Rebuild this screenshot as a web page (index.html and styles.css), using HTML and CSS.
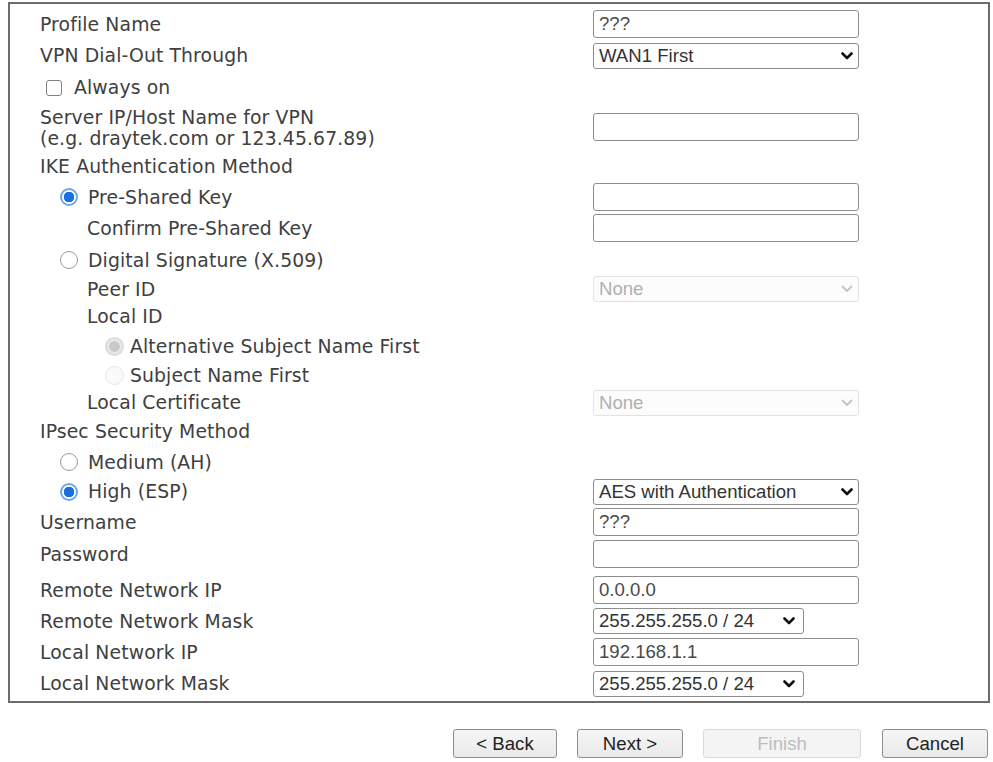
FILE: index.html
```html
<!DOCTYPE html>
<html lang="en">
<head>
<meta charset="utf-8">
<title>VPN Profile Wizard</title>
<link rel="stylesheet" href="styles.css">
</head>
<body>
<div class="page">
  <form class="panel">
    <div class="row h32">
      <div class="lbl">Profile Name</div>
      <div class="ctl"><input class="txt" type="text" value="???"></div>
    </div>
    <div class="row h31">
      <div class="lbl">VPN Dial-Out Through</div>
      <div class="ctl"><div class="sel"><span>WAN1 First</span><svg class="chev" viewBox="0 0 12 8" width="12" height="8"><path d="M1.5 1.5 L6 6 L10.5 1.5" /></svg></div></div>
    </div>
    <div class="row h33">
      <label class="lbl chk-wrap"><input class="chk" type="checkbox"><span>Always on</span></label>
      <div class="ctl"></div>
    </div>
    <div class="row h46">
      <div class="lbl two">Server IP/Host Name for VPN<br>(e.g. draytek.com or 123.45.67.89)</div>
      <div class="ctl"><input class="txt" type="text" value=""></div>
    </div>
    <div class="row h32">
      <div class="lbl">IKE Authentication Method</div>
      <div class="ctl"></div>
    </div>
    <div class="row h30">
      <label class="lbl ind1"><input class="rad" type="radio" name="ike" checked><span>Pre-Shared Key</span></label>
      <div class="ctl"><input class="txt" type="password" value=""></div>
    </div>
    <div class="row h32">
      <div class="lbl ind2">Confirm Pre-Shared Key</div>
      <div class="ctl"><input class="txt" type="password" value=""></div>
    </div>
    <div class="row h32">
      <label class="lbl ind1"><input class="rad" type="radio" name="ike"><span>Digital Signature (X.509)</span></label>
      <div class="ctl"></div>
    </div>
    <div class="row h25">
      <div class="lbl ind2">Peer ID</div>
      <div class="ctl"><div class="sel dis"><span>None</span><svg class="chev" viewBox="0 0 12 8" width="12" height="8"><path d="M1.5 1.5 L6 6 L10.5 1.5" /></svg></div></div>
    </div>
    <div class="row h30">
      <div class="lbl ind2">Local ID</div>
      <div class="ctl"></div>
    </div>
    <div class="row h30">
      <label class="lbl ind3"><input class="rad sm" type="radio" name="lid" checked disabled><span>Alternative Subject Name First</span></label>
      <div class="ctl"></div>
    </div>
    <div class="row h28">
      <label class="lbl ind3"><input class="rad sm" type="radio" name="lid" disabled><span>Subject Name First</span></label>
      <div class="ctl"></div>
    </div>
    <div class="row h27">
      <div class="lbl ind2">Local Certificate</div>
      <div class="ctl"><div class="sel dis"><span>None</span><svg class="chev" viewBox="0 0 12 8" width="12" height="8"><path d="M1.5 1.5 L6 6 L10.5 1.5" /></svg></div></div>
    </div>
    <div class="row h31">
      <div class="lbl">IPsec Security Method</div>
      <div class="ctl"></div>
    </div>
    <div class="row h30">
      <label class="lbl ind1"><input class="rad" type="radio" name="sec"><span>Medium (AH)</span></label>
      <div class="ctl"></div>
    </div>
    <div class="row h29">
      <label class="lbl ind1"><input class="rad" type="radio" name="sec" checked><span>High (ESP)</span></label>
      <div class="ctl"><div class="sel"><span>AES with Authentication</span><svg class="chev" viewBox="0 0 12 8" width="12" height="8"><path d="M1.5 1.5 L6 6 L10.5 1.5" /></svg></div></div>
    </div>
    <div class="row h32">
      <div class="lbl">Username</div>
      <div class="ctl"><input class="txt" type="text" value="???"></div>
    </div>
    <div class="row h32">
      <div class="lbl">Password</div>
      <div class="ctl"><input class="txt" type="password" value=""></div>
    </div>
    <div class="row h32 gap-top">
      <div class="lbl">Remote Network IP</div>
      <div class="ctl"><input class="txt" type="text" value="0.0.0.0"></div>
    </div>
    <div class="row h30">
      <div class="lbl">Remote Network Mask</div>
      <div class="ctl"><div class="sel short"><span>255.255.255.0 / 24</span><svg class="chev" viewBox="0 0 12 8" width="12" height="8"><path d="M1.5 1.5 L6 6 L10.5 1.5" /></svg></div></div>
    </div>
    <div class="row h32">
      <div class="lbl">Local Network IP</div>
      <div class="ctl"><input class="txt" type="text" value="192.168.1.1"></div>
    </div>
    <div class="row h31">
      <div class="lbl">Local Network Mask</div>
      <div class="ctl"><div class="sel short"><span>255.255.255.0 / 24</span><svg class="chev" viewBox="0 0 12 8" width="12" height="8"><path d="M1.5 1.5 L6 6 L10.5 1.5" /></svg></div></div>
    </div>
  </form>
  <div class="buttons">
    <button class="btn" type="button">&lt; Back</button>
    <button class="btn next" type="button">Next &gt;</button>
    <button class="btn wide" type="button" disabled>Finish</button>
    <button class="btn next last" type="button">Cancel</button>
  </div>
</div>
</body>
</html>
```
FILE: styles.css
```css
* { box-sizing: border-box; }

html, body {
  margin: 0;
  background: #ffffff;
}

body {
  font-family: "DejaVu Sans", Verdana, sans-serif;
  font-size: 18.8px;
  letter-spacing: 0.12px;
  color: #404040;
}

.page {
  padding: 2px 3px 0 8px;
}

.panel {
  border: 2px solid #6c6c6c;
  padding: 4px 0 2px 30px;
  height: 701px;
  margin: 0;
}

.row {
  display: grid;
  grid-template-columns: 553px 266px;
  align-items: center;
}

.h25 { height: 25px; }
.h27 { height: 27px; }
.h28 { height: 28px; }
.h29 { height: 29px; }
.h30 { height: 30px; }
.h31 { height: 31px; }
.h32 { height: 32px; }
.h33 { height: 33px; }
.h46 { height: 46px; }

.gap-top { margin-top: 4px; }

.lbl {
  display: flex;
  align-items: center;
  white-space: nowrap;
  line-height: 21px;
}

.lbl.two {
  display: block;
  padding-top: 1px;
}

.ind1 { padding-left: 20px; }
.ind2 { padding-left: 47px; }
.ind3 { padding-left: 65px; }

.ctl {
  display: flex;
  align-items: center;
}

/* text inputs */
.txt {
  width: 266px;
  height: 28px;
  margin: 0;
  border: 1.5px solid #8e8e8e;
  border-radius: 3px;
  padding: 0 5px;
  font-family: "Liberation Sans", Arial, sans-serif;
  font-size: 18.6px;
  letter-spacing: 0;
  color: #4a4a4a;
  background: #fff;
  outline: none;
}

/* selects */
.sel {
  width: 266px;
  height: 26px;
  border: 1.5px solid #8e8e8e;
  border-radius: 3px;
  padding: 0 5px 0 5px;
  display: flex;
  align-items: center;
  justify-content: space-between;
  font-family: "Liberation Sans", Arial, sans-serif;
  font-size: 18.6px;
  letter-spacing: 0;
  color: #333;
  background: #fff;
}

.sel.short {
  width: 211px;
  padding-right: 8px;
}

.chev {
  flex: none;
  fill: none;
  stroke: #111;
  stroke-width: 2.6;
  stroke-linecap: round;
  stroke-linejoin: round;
}

.sel.dis {
  border-color: #e2e2e2;
  color: #b0b0b0;
  background: #fcfcfc;
}

.sel.dis .chev {
  stroke: #c4c4c4;
  stroke-width: 1.8;
}

/* checkbox */
.chk-wrap { padding-left: 6px; }

.chk {
  appearance: none;
  -webkit-appearance: none;
  width: 16px;
  height: 16px;
  margin: 0 12px 0 0;
  border: 1.5px solid #808080;
  border-radius: 3px;
  background: #fff;
  flex: none;
}

/* radios */
.rad {
  appearance: none;
  -webkit-appearance: none;
  width: 18px;
  height: 18px;
  margin: 0 10px 0 0;
  border: 1.5px solid #9a9a9a;
  border-radius: 50%;
  background: #fff;
  flex: none;
}

.rad:checked {
  border: 2px solid #6fa6ee;
  background: radial-gradient(circle, #1a6fe0 0 5px, #ffffff 5.5px);
}

.rad.sm {
  width: 19px;
  height: 19px;
  margin-right: 6px;
}

.rad:disabled {
  border: 1.5px solid #e6e6e6;
  background: #fafafa;
}

.rad:disabled:checked {
  border: 2px solid #dcdcdc;
  background: radial-gradient(circle, #c8c8c8 0 5px, #e8e8e8 5.5px);
}

/* buttons */
.buttons {
  display: flex;
  justify-content: flex-end;
  gap: 20px;
  padding: 26px 2px 0 0;
}

.btn {
  width: 104px;
  height: 29px;
  margin: 0;
  padding: 0;
  border: 1.5px solid #8e8e8e;
  border-radius: 3px;
  background: linear-gradient(#f6f6f6, #e9e9e9);
  font-family: "Liberation Sans", Arial, sans-serif;
  font-size: 18.6px;
  color: #222;
}

.btn.next { width: 106px; }
.btn.last { margin-left: 1px; }

.btn.wide {
  width: 158px;
  border-color: #dadada;
  background: #f4f4f4;
  color: #bdbdbd;
}
```
